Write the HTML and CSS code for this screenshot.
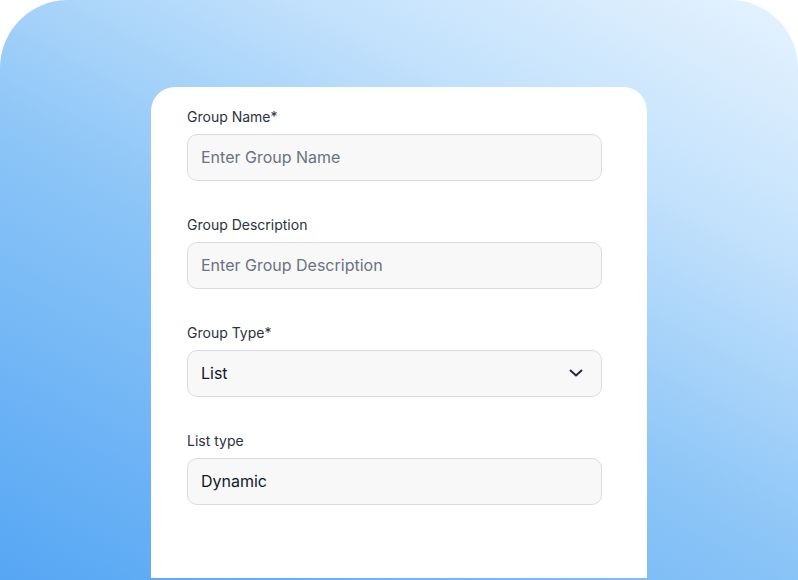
FILE: index.html
```html
<!DOCTYPE html>
<html>
<head>
<meta charset="utf-8">
<link rel="stylesheet" href="styles.css">
</head>
<body>
<div class="frame">
  <div class="card">
    <div class="field">
      <div class="label">Group Name*</div>
      <div class="input"><span class="placeholder">Enter Group Name</span></div>
    </div>
    <div class="field">
      <div class="label">Group Description</div>
      <div class="input"><span class="placeholder">Enter Group Description</span></div>
    </div>
    <div class="field">
      <div class="label">Group Type*</div>
      <div class="input select"><span class="value">List</span>
        <svg class="chev" width="14" height="8" viewBox="0 0 14 8"><path d="M1.5 1.5 L7 6.5 L12.5 1.5" fill="none" stroke="#1f2937" stroke-width="1.9" stroke-linecap="round" stroke-linejoin="round"/></svg>
      </div>
    </div>
    <div class="field">
      <div class="label">List type</div>
      <div class="input"><span class="value">Dynamic</span></div>
    </div>
  </div>
</div>
</body>
</html>
```
FILE: styles.css
```css
html, body {
  margin: 0;
  padding: 0;
  background: #ffffff;
}
body {
  font-family: Inter, "Noto Sans", sans-serif;
}
.frame {
  width: 798px;
  height: 580px;
  box-sizing: border-box;
  border-radius: 68px 68px 0 0;
  background: linear-gradient(28deg, #56a6f4 0%, #8cc5f7 45%, #c4e2fc 75%, #e6f3fe 100%);
  padding: 87px 151px 2px 151px;
  overflow: hidden;
}
.card {
  height: 100%;
  box-sizing: border-box;
  background: #ffffff;
  border-radius: 24px 24px 0 0;
  padding: 20px 0 0 36px;
  display: flex;
  flex-direction: column;
  gap: 34px;
}
.field {
  display: flex;
  flex-direction: column;
  gap: 7px;
}
.label {
  font-size: 14px;
  line-height: 20px;
  color: #2b3240;
}
.input {
  width: 415px;
  height: 47px;
  box-sizing: border-box;
  border: 1px solid #d9dce1;
  border-radius: 10px;
  background: #f8f8f8;
  padding: 0 18px 2px 13px;
  display: flex;
  align-items: center;
  justify-content: space-between;
  font-size: 16px;
}
.placeholder {
  color: #6b7280;
}
.value {
  color: #111827;
  font-weight: 400;
}
.chev {
  display: block;
}
```
